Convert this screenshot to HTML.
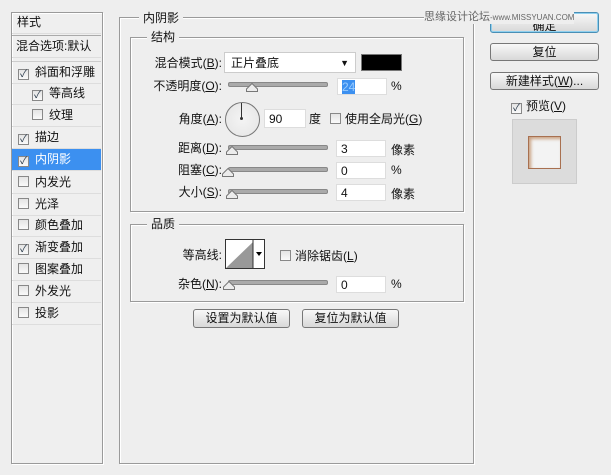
<!DOCTYPE html>
<html><head><meta charset="utf-8"><style>
body{margin:0;width:611px;height:475px;background:#eeeeee;font-family:"Liberation Sans","Noto Sans CJK SC",sans-serif;font-size:12px;color:#111;position:relative;overflow:hidden}
.a{position:absolute}
.box{position:absolute;border:1px solid #9a9a9a;box-shadow:inset 1px 1px 0 #fff,1px 1px 0 #fff}
.row{position:absolute;left:12px;width:89px;height:21px;line-height:21px;border-bottom:1px solid #ddd}
.cb{display:inline-block;width:9px;height:9px;border:1px solid #888;background:linear-gradient(#e4e4e4,#fafafa);vertical-align:-1px;margin:0 6px 0 6px;position:relative;font-size:10px;line-height:9px;text-align:center;color:#234}
.lbl{position:absolute;text-align:right;width:110px;height:18px;line-height:18px}
.track{position:absolute;height:3px;background:#aaa;border:1px solid #888;border-radius:2px}
.thumb{position:absolute;width:12px;height:9px}
.in{position:absolute;background:#fff;border:1px solid #ddd;height:17px;line-height:17px;padding-left:4px;box-sizing:border-box}
.btn{position:absolute;border:1px solid #777;border-radius:3px;background:linear-gradient(#f8f8f8,#d8d8d8);text-align:center;box-sizing:border-box;font-size:12px}
.leg{position:absolute;background:#eeeeee;padding:0 4px}
</style></head><body>
<div class="box" style="left:11px;top:12px;width:90px;height:450px;background:#efefef"></div>
<div class="row" style="top:12px;padding-left:5px;width:84px">样式</div>
<div class="row" style="top:35px;padding-left:4px;width:85px;border-top:1px solid #aaa">混合选项:默认</div>
<div class="row" style="top:61px;border-top:1px solid #ccc"><span class="cb">✓</span>斜面和浮雕</div>
<div class="row" style="top:83px"><span class="cb" style="margin-left:20px">✓</span>等高线</div>
<div class="row" style="top:105px"><span class="cb" style="margin-left:20px"></span>纹理</div>
<div class="row" style="top:127px"><span class="cb">✓</span>描边</div>
<div class="row" style="top:149px;background:#3c90f0;color:#fff"><span class="cb">✓</span>内阴影</div>
<div class="row" style="top:172px"><span class="cb"></span>内发光</div>
<div class="row" style="top:194px"><span class="cb"></span>光泽</div>
<div class="row" style="top:215px"><span class="cb"></span>颜色叠加</div>
<div class="row" style="top:237px"><span class="cb">✓</span>渐变叠加</div>
<div class="row" style="top:259px"><span class="cb"></span>图案叠加</div>
<div class="row" style="top:281px"><span class="cb"></span>外发光</div>
<div class="row" style="top:303px"><span class="cb"></span>投影</div>

<div class="box" style="left:119px;top:17px;width:353px;height:445px"></div>
<div class="leg" style="left:139px;top:9px">内阴影</div>
<div class="box" style="left:130px;top:37px;width:332px;height:173px"></div>
<div class="leg" style="left:147px;top:28px">结构</div>

<div class="lbl" style="left:112px;top:54px">混合模式(<u>B</u>):</div>
<div class="a" style="left:224px;top:52px;width:132px;height:21px;background:#fff;border:1px solid #ccc;box-sizing:border-box;line-height:20px;padding-left:6px">正片叠底<span style="position:absolute;right:6px;top:0;font-size:9px">▼</span></div>
<div class="a" style="left:361px;top:54px;width:41px;height:17px;background:#000;border:1px solid #777;box-sizing:border-box"></div>

<div class="lbl" style="left:112px;top:77px">不透明度(<u>O</u>):</div>
<div class="track" style="left:228px;top:82px;width:98px"></div>
<svg class="thumb" style="left:246px;top:83px"><polygon points="6,0.5 11.5,6 11.5,8.5 0.5,8.5 0.5,6" fill="#ececec" stroke="#777"/></svg>
<div class="in" style="left:337px;top:78px;width:50px"><span style="background:#3c90f0;color:#9cf">24</span></div>
<div class="a" style="left:391px;top:79px">%</div>

<div class="lbl" style="left:112px;top:110px">角度(<u>A</u>):</div>
<div class="a" style="left:225px;top:102px;width:33px;height:33px;border-radius:50%;border:1px solid #777;background:radial-gradient(#f4f4f4,#e4e4e4)"></div>
<div class="a" style="left:241px;top:103px;width:1px;height:16px;background:#333"></div>
<div class="a" style="left:240px;top:117px;width:3px;height:3px;border-radius:50%;background:#333"></div>
<div class="in" style="left:264px;top:109px;width:42px;height:19px;line-height:19px">90</div>
<div class="a" style="left:309px;top:110px">度</div>
<div class="a" style="left:330px;top:110px"><span class="cb" style="margin:0 4px 0 0"></span>使用全局光(<u>G</u>)</div>

<div class="lbl" style="left:112px;top:139px">距离(<u>D</u>):</div>
<div class="track" style="left:228px;top:145px;width:98px"></div>
<svg class="thumb" style="left:226px;top:146px"><polygon points="6,0.5 11.5,6 11.5,8.5 0.5,8.5 0.5,6" fill="#ececec" stroke="#777"/></svg>
<div class="in" style="left:336px;top:140px;width:50px">3</div>
<div class="a" style="left:391px;top:141px">像素</div>

<div class="lbl" style="left:112px;top:161px">阻塞(<u>C</u>):</div>
<div class="track" style="left:228px;top:167px;width:98px"></div>
<svg class="thumb" style="left:222px;top:168px"><polygon points="6,0.5 11.5,6 11.5,8.5 0.5,8.5 0.5,6" fill="#ececec" stroke="#777"/></svg>
<div class="in" style="left:336px;top:162px;width:50px">0</div>
<div class="a" style="left:391px;top:163px">%</div>

<div class="lbl" style="left:112px;top:183px">大小(<u>S</u>):</div>
<div class="track" style="left:228px;top:189px;width:98px"></div>
<svg class="thumb" style="left:226px;top:190px"><polygon points="6,0.5 11.5,6 11.5,8.5 0.5,8.5 0.5,6" fill="#ececec" stroke="#777"/></svg>
<div class="in" style="left:336px;top:184px;width:50px">4</div>
<div class="a" style="left:391px;top:185px">像素</div>

<div class="box" style="left:130px;top:224px;width:332px;height:76px"></div>
<div class="leg" style="left:147px;top:215px">品质</div>
<div class="lbl" style="left:112px;top:246px">等高线:</div>
<div class="a" style="left:225px;top:239px;width:40px;height:30px;border:1px solid #333;background:#fff;box-sizing:border-box;overflow:hidden">
<svg width="40" height="30" style="position:absolute;left:-1px;top:-1px"><polygon points="1,29 28,3 28,29" fill="#999"/><line x1="28" y1="0" x2="28" y2="30" stroke="#333"/><polygon points="31,13 37,13 34,17" fill="#000"/></svg></div>
<div class="a" style="left:280px;top:247px"><span class="cb" style="margin:0 4px 0 0"></span>消除锯齿(<u>L</u>)</div>
<div class="lbl" style="left:112px;top:275px">杂色(<u>N</u>):</div>
<div class="track" style="left:228px;top:280px;width:98px"></div>
<svg class="thumb" style="left:223px;top:281px"><polygon points="6,0.5 11.5,6 11.5,8.5 0.5,8.5 0.5,6" fill="#ececec" stroke="#777"/></svg>
<div class="in" style="left:336px;top:276px;width:50px">0</div>
<div class="a" style="left:391px;top:277px">%</div>

<div class="btn" style="left:193px;top:309px;width:97px;height:19px;line-height:17px">设置为默认值</div>
<div class="btn" style="left:302px;top:309px;width:97px;height:19px;line-height:17px">复位为默认值</div>

<div class="btn" style="left:490px;top:12px;width:109px;height:21px;line-height:26px;border-color:#4a8fb5;box-shadow:inset 0 0 0 1px #8fd0ef">确定</div>
<div class="a" style="left:424px;top:8px;font-size:11px;color:#666;background:#eeeeee">思缘设计论坛<span style="font-size:8px">-www.MISSYUAN.COM</span></div>
<div class="btn" style="left:490px;top:43px;width:109px;height:18px;line-height:17px">复位</div>
<div class="btn" style="left:490px;top:72px;width:109px;height:18px;line-height:17px">新建样式(<u>W</u>)...</div>
<div class="a" style="left:511px;top:97px"><span class="cb" style="margin:0 4px 0 0">✓</span>预览(<u>V</u>)</div>
<div class="a" style="left:512px;top:119px;width:65px;height:65px;background:#dcdcdc;border:1px solid #ccc;box-sizing:border-box"></div>
<div class="a" style="left:528px;top:136px;width:33px;height:33px;border:1px solid #a87050;box-sizing:border-box;background:#f3f3f3;box-shadow:inset 2px 2px 3px #c9a080"></div>
</body></html>
